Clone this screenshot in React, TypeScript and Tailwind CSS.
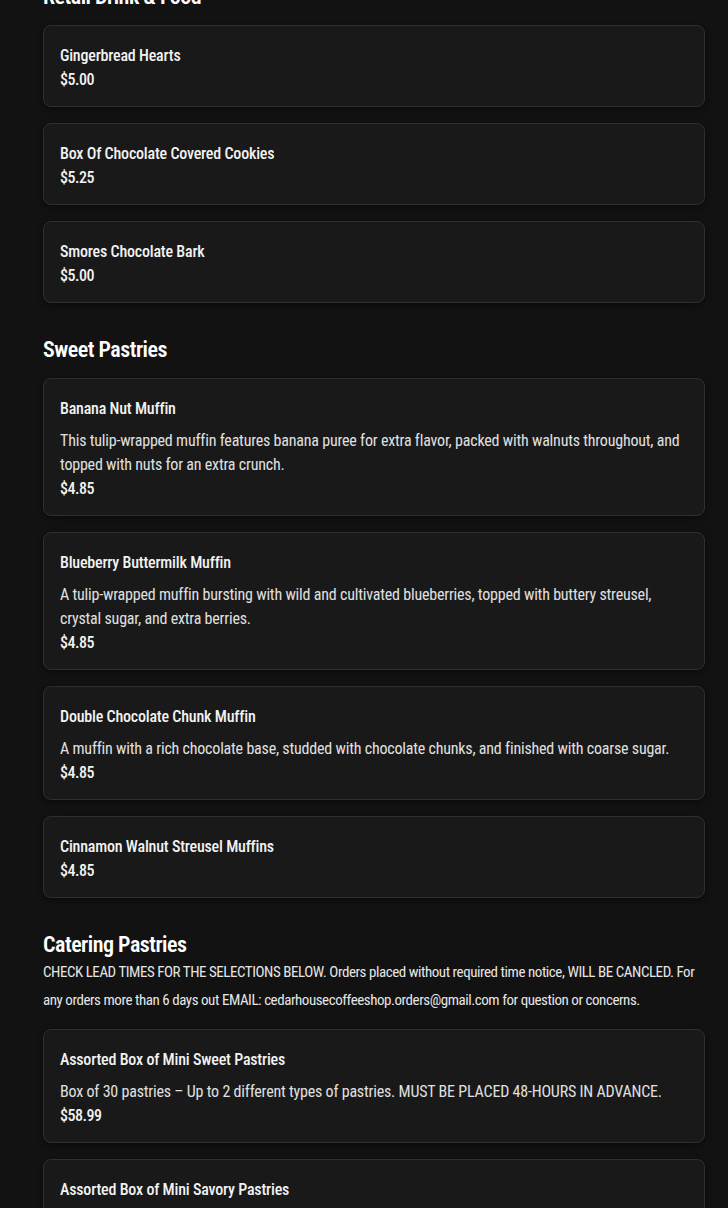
import React from "react";

interface MenuItem {
  name: string;
  description?: string;
  price: string;
}

interface MenuSection {
  title: string;
  note?: string;
  items: MenuItem[];
}

const sections: MenuSection[] = [
  {
    title: "Retail Drink & Food",
    items: [
      { name: "Gingerbread Hearts", price: "$5.00" },
      { name: "Box Of Chocolate Covered Cookies", price: "$5.25" },
      { name: "Smores Chocolate Bark", price: "$5.00" },
    ],
  },
  {
    title: "Sweet Pastries",
    items: [
      {
        name: "Banana Nut Muffin",
        description:
          "This tulip-wrapped muffin features banana puree for extra flavor, packed with walnuts throughout, and topped with nuts for an extra crunch.",
        price: "$4.85",
      },
      {
        name: "Blueberry Buttermilk Muffin",
        description:
          "A tulip-wrapped muffin bursting with wild and cultivated blueberries, topped with buttery streusel, crystal sugar, and extra berries.",
        price: "$4.85",
      },
      {
        name: "Double Chocolate Chunk Muffin",
        description:
          "A muffin with a rich chocolate base, studded with chocolate chunks, and finished with coarse sugar.",
        price: "$4.85",
      },
      { name: "Cinnamon Walnut Streusel Muffins", price: "$4.85" },
    ],
  },
  {
    title: "Catering Pastries",
    note: "CHECK LEAD TIMES FOR THE SELECTIONS BELOW. Orders placed without required time notice, WILL BE CANCLED. For any orders more than 6 days out EMAIL: cedarhousecoffeeshop.orders@gmail.com for question or concerns.",
    items: [
      {
        name: "Assorted Box of Mini Sweet Pastries",
        description:
          "Box of 30 pastries – Up to 2 different types of pastries. MUST BE PLACED 48-HOURS IN ADVANCE.",
        price: "$58.99",
      },
      {
        name: "Assorted Box of Mini Savory Pastries",
        description:
          "Box of 30 pastries – Up to 2 different types of pastries. MUST BE PLACED 48-HOURS IN ADVANCE.",
        price: "$58.99",
      },
    ],
  },
];

const ItemCard: React.FC<{ item: MenuItem }> = ({ item }) => (
  <div className="rounded-lg border border-[#2f2f2f] bg-[#191919] px-4 pt-[18px] pb-[14px] shadow-[0_2px_6px_rgba(0,0,0,0.5)]">
    <h3 className="text-[16px] leading-6 font-medium tracking-[-0.2px] text-[#f2f2f2]">
      {item.name}
    </h3>
    {item.description && (
      <p className="mt-2 text-[16px] leading-6 tracking-[-0.2px] text-[#e0e0e0]">
        {item.description}
      </p>
    )}
    <p className="text-[16px] leading-6 font-medium tracking-[-0.5px] text-[#f2f2f2]">
      {item.price}
    </p>
  </div>
);

const App: React.FC = () => {
  return (
    <div
      className="min-h-screen bg-[#121212] pl-[43px] pr-[23px] pb-10 text-white"
      style={{ fontFamily: "'Roboto Condensed', 'Liberation Sans', sans-serif" }}
    >
      <div className="-mt-[20px]">
        {sections.map((section, i) => (
          <section key={section.title} className={i > 0 ? "mt-[30px]" : ""}>
            <h2 className="pt-[2px] -mb-[2px] text-[22px] leading-[30px] font-semibold tracking-[-0.5px] text-white">
              {section.title}
            </h2>
            {section.note && (
              <p className="text-[15px] leading-[28px] tracking-[-0.45px] text-[#e6e6e6]">
                {section.note}
              </p>
            )}
            <div className="mt-[15px] flex flex-col gap-4">
              {section.items.map((item) => (
                <ItemCard key={item.name} item={item} />
              ))}
            </div>
          </section>
        ))}
      </div>
    </div>
  );
};

export default App;
